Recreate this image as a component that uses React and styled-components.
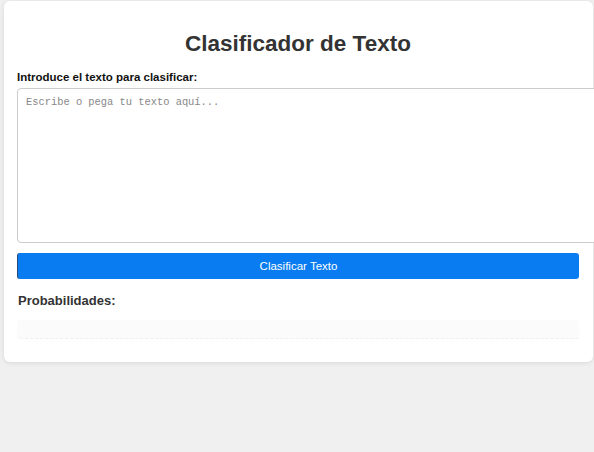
import React from 'react';
import styled, { createGlobalStyle } from 'styled-components';

const GlobalStyle = createGlobalStyle`
    html, body {
        margin: 0;
        padding: 0;
        background: #f0f0f0;
        font-family: "Liberation Sans", Arial, sans-serif;
    }
`

export default function App() {
    return (
        <Page>
            <GlobalStyle />
            <Card>
                <Title>Clasificador de Texto</Title>
                <Label htmlFor="texto">Introduce el texto para clasificar:</Label>
                <TextArea id="texto" placeholder="Escribe o pega tu texto aquí..." />
                <Button>Clasificar Texto</Button>
                <SubTitle>Probabilidades:</SubTitle>
                <Results />
            </Card>
        </Page>
    );
}

const Page = styled.div`
    min-height: 452px;
    padding: 1px 1px 0 4px;
`
const Card = styled.div`
    background: #fff;
    border-radius: 6px;
    box-shadow: 0 1px 5px rgba(0, 0, 0, 0.1);
    padding: 30px 14px 23px 13px;
    width: 562px;
    display: flex;
    flex-direction: column;
`
const Title = styled.h1`
    margin: 0 0 14px;
    text-align: center;
    font-size: 22.5px;
    font-weight: 700;
    color: #333;
`
const Label = styled.label`
    font-size: 11.5px;
    font-weight: 700;
    color: #111;
    margin-bottom: 5px;
`
const TextArea = styled.textarea`
    width: 578px;
    height: 139px;
    padding: 7px 8px;
    border: 1px solid #ccc;
    border-radius: 4px;
    resize: none;
    font-family: "Liberation Mono", monospace;
    font-size: 10.4px;
    color: #333;
    &::placeholder {
        color: #888;
    }
`
const Button = styled.button`
    margin-top: 10px;
    height: 26px;
    background: #087cf0;
    color: #fff;
    border: none;
    border-left: 1px solid #2b4a7a;
    border-radius: 3px;
    font-family: "Liberation Sans", Arial, sans-serif;
    font-size: 11.5px;
`
const SubTitle = styled.h2`
    margin: 14px 0 12px 1px;
    font-size: 13px;
    font-weight: 700;
    color: #333;
`
const Results = styled.div`
    height: 18px;
    background: #fbfbfb;
    border-bottom: 1px dashed #f0f0f0;
    border-radius: 3px;
`
